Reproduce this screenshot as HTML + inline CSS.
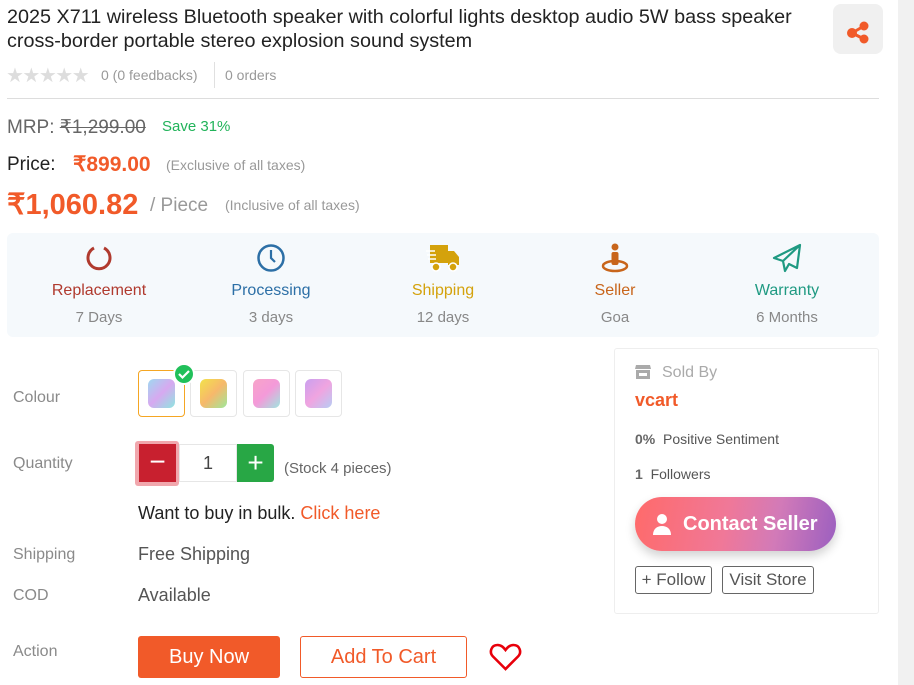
<!DOCTYPE html>
<html><head><meta charset="utf-8"><style>
*{margin:0;padding:0;box-sizing:border-box}
body{width:914px;height:685px;overflow:hidden;background:#fff;font-family:"Liberation Sans",sans-serif;position:relative;color:#333}
.a{position:absolute;white-space:nowrap}
.lbl{color:#8a8a8a;font-size:16px}
.val{color:#555;font-size:18px}
.feat{position:absolute;top:0;width:172px;text-align:center}
.feat .t{font-size:16px;margin-top:4px}
.feat .s{font-size:15px;color:#888;margin-top:9px}
.sw{position:absolute;top:370px;width:47px;height:47px;border:1px solid #e6e6e6;border-radius:4px;display:flex;align-items:center;justify-content:center}
.sw i{display:block;width:27px;height:29px;border-radius:6px}
</style></head><body>
<div style="position:absolute;left:898px;top:0;width:16px;height:685px;background:#f1f1f1"></div>

<div class="a" style="left:7px;top:5px;font-size:19.8px;line-height:24px;color:#222">2025 X711 wireless Bluetooth speaker with colorful lights desktop audio 5W bass speaker<br>cross-border portable stereo explosion sound system</div>
<div class="a" style="left:833px;top:4px;width:50px;height:50px;background:#f0f0f0;border-radius:8px">
<svg width="50" height="50" viewBox="0 0 50 50"><g fill="#f15a29"><circle cx="19" cy="29" r="5"/><circle cx="31" cy="22" r="4.5"/><circle cx="31" cy="35" r="4.5"/></g><path d="M19 29L31 22M19 29L31 35" stroke="#f15a29" stroke-width="3"/></svg></div>

<div class="a" style="left:6px;top:63px;font-size:20px;color:#ddd;letter-spacing:-1.5px">★★★★★</div>
<div class="a" style="left:101px;top:67px;font-size:14px;color:#999">0 (0 feedbacks)</div>
<div class="a" style="left:214px;top:62px;width:1px;height:26px;background:#e0e0e0"></div>
<div class="a" style="left:225px;top:67px;font-size:14px;color:#999">0 orders</div>
<div class="a" style="left:7px;top:98px;width:872px;height:1px;background:#ddd"></div>

<div class="a" style="left:7px;top:116px;font-size:19px;color:#666">MRP: <s>₹1,299.00</s></div>
<div class="a" style="left:162px;top:118px;font-size:15px;color:#21b35a">Save 31%</div>
<div class="a" style="left:7px;top:154px;font-size:19px;color:#222">Price:</div>
<div class="a" style="left:73px;top:152px;font-size:21px;color:#f15a29;font-weight:bold">₹899.00</div>
<div class="a" style="left:166px;top:157px;font-size:14px;color:#999">(Exclusive of all taxes)</div>
<div class="a" style="left:7px;top:187px;font-size:29px;color:#f15a29;font-weight:bold">₹1,060.82</div>
<div class="a" style="left:150px;top:195px;font-size:19px;color:#999">/ Piece</div>
<div class="a" style="left:225px;top:197px;font-size:14px;color:#999">(Inclusive of all taxes)</div>

<div class="a" style="left:7px;top:233px;width:872px;height:104px;background:#f5f9fc;border-radius:6px">
 <div class="feat" style="left:6px;top:10px"><svg width="30" height="30" viewBox="0 0 30 30"><path d="M10 5A11 11 0 1 0 20 5" fill="none" stroke="#b03a2e" stroke-width="3"/></svg><div class="t" style="color:#b03a2e">Replacement</div><div class="s">7 Days</div></div>
 <div class="feat" style="left:178px;top:10px"><svg width="30" height="30" viewBox="0 0 30 30"><circle cx="15" cy="15" r="12.5" fill="none" stroke="#2c6fa6" stroke-width="2.5"/><path d="M15 7v8l4 4" fill="none" stroke="#2c6fa6" stroke-width="2.2"/></svg><div class="t" style="color:#2c6fa6">Processing</div><div class="s">3 days</div></div>
 <div class="feat" style="left:350px;top:10px"><svg width="34" height="30" viewBox="0 0 34 30"><rect x="4" y="2" width="18" height="18" fill="#d4a20c"/><path d="M22 8h6l5 6v8H22z" fill="#d4a20c"/><circle cx="10" cy="24" r="4" fill="#d4a20c" stroke="#fff" stroke-width="1.5"/><circle cx="27" cy="24" r="4" fill="#d4a20c" stroke="#fff" stroke-width="1.5"/><path d="M0 8h9M1 12h9M2 16h8" stroke="#fff" stroke-width="1.5"/></svg><div class="t" style="color:#d4a20c">Shipping</div><div class="s">12 days</div></div>
 <div class="feat" style="left:522px;top:10px"><svg width="30" height="30" viewBox="0 0 30 30"><circle cx="15" cy="4" r="3.5" fill="#c8651b"/><rect x="11.5" y="9" width="7" height="13" rx="2" fill="#c8651b"/><ellipse cx="15" cy="23" rx="12" ry="5" fill="none" stroke="#c8651b" stroke-width="2.5"/></svg><div class="t" style="color:#c8651b">Seller</div><div class="s">Goa</div></div>
 <div class="feat" style="left:694px;top:10px"><svg width="30" height="30" viewBox="0 0 30 30"><path d="M28 2L2 15l9 3 2 10 4-7 8 4z M28 2L11 18" fill="none" stroke="#1f9a82" stroke-width="2.2" stroke-linejoin="round"/></svg><div class="t" style="color:#1f9a82">Warranty</div><div class="s">6 Months</div></div>
</div>

<div class="a lbl" style="left:13px;top:389px">Colour</div>
<div class="sw" style="left:138px;border-color:#f5a623"><i style="background:linear-gradient(135deg,#9fd8f0,#d7a9f0,#8ee6e0)"></i></div>
<div class="sw" style="left:190px"><i style="background:linear-gradient(135deg,#f2e24a,#f7b86b,#9ee89a)"></i></div>
<div class="sw" style="left:243px"><i style="background:linear-gradient(135deg,#f7a4c8,#f49ad9,#9fe6e0)"></i></div>
<div class="sw" style="left:295px"><i style="background:linear-gradient(135deg,#c9a0ef,#f0a4e0,#b7cdf4)"></i></div>
<div class="a" style="left:173px;top:363px;width:22px;height:22px;border-radius:50%;background:#21c05a;border:2px solid #fff"><svg width="18" height="18" viewBox="0 0 18 18"><path d="M4 9l3.5 3.5L14 6" fill="none" stroke="#fff" stroke-width="2.2"/></svg></div>

<div class="a lbl" style="left:13px;top:455px">Quantity</div>
<div class="a" style="left:135px;top:441px;width:44px;height:45px;background:#f1a7ad;border-radius:3px"></div>
<div class="a" style="left:139px;top:444px;width:37px;height:38px;background:#c8202f;color:#fff;font-size:28px;text-align:center;line-height:36px">−</div>
<div class="a" style="left:179px;top:444px;width:58px;height:38px;border:1px solid #e6e6e6;text-align:center;line-height:36px;font-size:18px;color:#444">1</div>
<div class="a" style="left:237px;top:444px;width:37px;height:38px;background:#28a745;color:#fff;font-size:28px;text-align:center;line-height:37px;border-radius:0 3px 3px 0">+</div>
<div class="a" style="left:284px;top:460px;font-size:15px;color:#666">(Stock 4 pieces)</div>

<div class="a" style="left:138px;top:503px;font-size:18px;color:#222">Want to buy in bulk. <span style="color:#f15a29">Click here</span></div>

<div class="a lbl" style="left:13px;top:546px">Shipping</div>
<div class="a val" style="left:138px;top:544px">Free Shipping</div>
<div class="a lbl" style="left:13px;top:587px">COD</div>
<div class="a val" style="left:138px;top:585px">Available</div>
<div class="a lbl" style="left:13px;top:643px">Action</div>
<div class="a" style="left:138px;top:636px;width:142px;height:42px;background:#f15a29;border-radius:3px;color:#fff;font-size:20px;text-align:center;line-height:42px">Buy Now</div>
<div class="a" style="left:300px;top:636px;width:167px;height:42px;border:1px solid #f15a29;border-radius:3px;color:#f15a29;font-size:20px;text-align:center;line-height:40px">Add To Cart</div>
<svg class="a" style="left:489px;top:642px" width="33" height="30" viewBox="0 0 33 30"><path d="M16.5 27L4 14.5C0 10.5 2 3 8.5 3c4 0 6 2.5 8 5 2-2.5 4-5 8-5C31 3 33 10.5 29 14.5z" fill="none" stroke="#e8000b" stroke-width="2.6"/></svg>

<div class="a" style="left:614px;top:348px;width:265px;height:266px;border:1px solid #eee;border-radius:3px"></div>
<svg class="a" style="left:635px;top:364px" width="16" height="15" viewBox="0 0 16 15"><path d="M1 1h14l1 4H0z M1 6h14v9H1z" fill="#aaa"/><rect x="4" y="9" width="8" height="3" fill="#fff"/></svg>
<div class="a" style="left:662px;top:364px;font-size:16px;color:#aaa">Sold By</div>
<div class="a" style="left:635px;top:390px;font-size:18px;color:#f15a29;font-weight:bold">vcart</div>
<div class="a" style="left:635px;top:431px;font-size:14px;color:#555"><b style="color:#666">0%</b>&nbsp;&nbsp;Positive Sentiment</div>
<div class="a" style="left:635px;top:466px;font-size:14px;color:#555"><b style="color:#666">1</b>&nbsp;&nbsp;Followers</div>
<div class="a" style="left:635px;top:497px;width:201px;height:54px;border-radius:27px;background:linear-gradient(100deg,#ff6a6a 0%,#f07898 45%,#d27ab8 70%,#9b5fc0 100%);box-shadow:0 5px 10px rgba(0,0,0,.18);color:#fff;font-weight:bold;font-size:20px;line-height:54px;padding-left:48px">Contact Seller</div>
<svg class="a" style="left:652px;top:513px" width="20" height="22" viewBox="0 0 20 22"><circle cx="10" cy="6" r="5" fill="#fff"/><path d="M1 22c0-6 4-9 9-9s9 3 9 9z" fill="#fff"/></svg>
<div class="a" style="left:635px;top:566px;width:77px;height:28px;border:1px solid #666;border-radius:3px;font-size:17px;color:#555;text-align:center;line-height:26px">+ Follow</div>
<div class="a" style="left:722px;top:566px;width:92px;height:28px;border:1px solid #666;border-radius:3px;font-size:17px;color:#555;text-align:center;line-height:26px">Visit Store</div>
</body></html>
